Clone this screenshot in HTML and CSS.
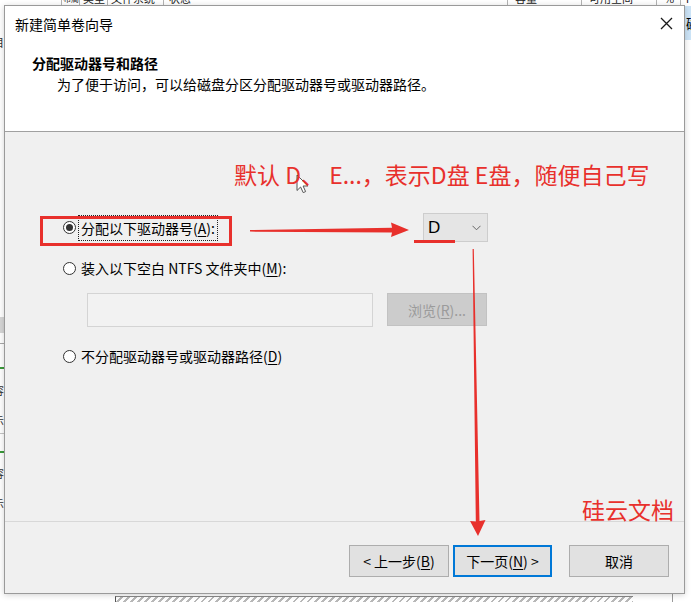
FILE: index.html
```html
<!DOCTYPE html>
<html lang="zh-CN">
<head>
<meta charset="utf-8">
<title>新建简单卷向导</title>
<link rel="stylesheet" href="styles.css">
</head>
<body>
<div class="app">
  <div class="cols">
    <div class="col c0"></div>
    <div class="col c1"><span>布局</span></div>
    <div class="col c2"><span>类型</span></div>
    <div class="col c3"><span>文件系统</span></div>
    <div class="col c4"><span>状态</span></div>
    <div class="col c5"><span>容量</span></div>
    <div class="col c6"><span>可用空间</span></div>
    <div class="col c7"><span>%</span></div>
    <div class="col c8"><span>i</span></div>
  </div>
  <div class="app-main">
    <div class="lstrip">
      <div class="ls-glyph">目</div>
      <div class="ls-bar"></div>
      <div class="ls-line"></div>
      <div class="ls-green"></div>
      <div class="ls-text">容</div>
      <div class="ls-text">0</div>
      <div class="ls-text">示</div>
      <div class="ls-line2"></div>
      <div class="ls-green2"></div>
      <div class="ls-text first2">容</div>
      <div class="ls-text">0</div>
      <div class="ls-text">示</div>
    </div>
    <div class="app-fill"></div>
    <div class="rstrip"><div class="sel">磁</div></div>
  </div>
  <div class="app-bottom"><div class="hatch"></div><div class="vline"></div></div>
</div>

<div class="dialog">
  <div class="head">
    <div class="titlebar">
      <span class="title">新建简单卷向导</span>
      <svg class="close" width="13" height="13" viewBox="0 0 13 13"><path d="M1 1 L12 12 M12 1 L1 12" stroke="#1a1a1a" stroke-width="1.3" fill="none"/></svg>
    </div>
    <div class="heading">分配驱动器号和路径</div>
    <div class="desc">为了便于访问，可以给磁盘分区分配驱动器号或驱动器路径。</div>
  </div>
  <div class="body">
    <div class="row row1">
      <div class="opt opt-main">
        <span class="radio on"></span>
        <span class="lbl focus">分配以下驱动器号(<u>A</u>):</span>
      </div>
      <div class="combo">
        <span class="val">D</span>
        <svg width="9" height="6" viewBox="0 0 9 6"><polyline points="0.5,0.8 4.5,4.8 8.5,0.8" fill="none" stroke="#666" stroke-width="1"/></svg>
      </div>
    </div>
    <div class="row row2">
      <div class="opt">
        <span class="radio"></span>
        <span class="lbl">装入以下空白 NTFS 文件夹中(<u>M</u>):</span>
      </div>
    </div>
    <div class="tbrow">
      <div class="tb"></div>
      <div class="browse">浏览(<u>R</u>)...</div>
    </div>
    <div class="row row3">
      <div class="opt">
        <span class="radio"></span>
        <span class="lbl">不分配驱动器号或驱动器路径(<u>D</u>)</span>
      </div>
    </div>
  </div>
  <div class="footer">
    <div class="btn">&lt; 上一步(<u>B</u>)</div>
    <div class="btn def">下一页(<u>N</u>) &gt;</div>
    <div class="btn cancel">取消</div>
  </div>
</div>

<svg class="annot" width="691" height="602" viewBox="0 0 691 602">
  <rect x="41.5" y="217.5" width="189" height="27" fill="none" stroke="#e8302c" stroke-width="3"/>
  <polygon points="250,230 392,227.8 391,222.5 409,230 391,237 392,232.5 250,231.6" fill="#e8302c"/>
  <rect x="414" y="240" width="41" height="3" fill="#e8302c"/>
  <polygon points="472.6,249 473.8,249 479.5,521 485.5,520 478,536 470,521 475.8,521.5" fill="#e8302c"/>
  <path transform="translate(297,175)" d="M0 0 L0 15.5 L3.6 12 L6.2 17.6 L8.6 16.6 L6.1 11 L11 11 Z" fill="#fff" stroke="#555" stroke-width="1" stroke-linejoin="round"/>
</svg>
<div class="note note1">默认 D、 E...，表示D盘 E盘，随便自己写</div>
<div class="note note2">硅云文档</div>
</body>
</html>
```

FILE: styles.css
```css
* { box-sizing: border-box; }
html, body { margin: 0; padding: 0; }
body {
  width: 691px;
  height: 602px;
  overflow: hidden;
  position: relative;
  background: #fff;
  font-family: "Noto Sans CJK SC", "Microsoft YaHei", sans-serif;
  font-size: 14px;
  color: #000;
}
u { text-decoration: underline; text-underline-offset: 2px; }

/* background application */
.app { display: flex; flex-direction: column; height: 602px; }
.cols { display: flex; height: 5px; overflow: hidden; background: #fff; font-size: 11px; color: #222; }
.col { border-left: 1px solid #b4b4b4; padding-left: 7px; overflow: hidden; flex: none; }
.col span { display: block; margin-top: -7px; line-height: 11px; white-space: nowrap; }
.c0 { width: 61px; border-left: none; }
.c1 { width: 18px; padding-left: 1px; font-size: 8px; }
.c2 { width: 28px; padding-left: 3px; }
.c3 { width: 56px; padding-left: 3px; font-size: 11px; }
.c4 { width: 344px; padding-left: 5px; }
.c5 { width: 74px; }
.c6 { width: 75px; }
.c7 { width: 24px; }
.c8 { flex: 1; padding-left: 5px; }

.app-main { flex: 1; display: flex; }
.lstrip { width: 4px; overflow: hidden; display: flex; flex-direction: column; font-size: 11px; color: #333; }
.ls-glyph { margin-top: 30px; height: 15px; line-height: 15px; margin-left: -7px; }
.ls-bar { margin-top: 267px; height: 16px; background: #d6d6d6; }
.ls-line { margin-top: 10px; height: 1px; background: #a8a8a8; }
.ls-green { margin-top: 23px; height: 2px; background: #3a9a3a; }
.ls-text { height: 15px; line-height: 15px; margin-left: -7px; overflow: hidden; }
.ls-green + .ls-text { margin-top: 14px; }
.ls-line2 { margin-top: 5px; height: 1px; background: #c4c4c4; }
.ls-green2 { margin-top: 17px; height: 2px; background: #3a9a3a; }
.ls-text.first2 { margin-top: 13px; }
.app-fill { flex: 1; }
.rstrip { width: 6px; overflow: hidden; }
.sel { margin-top: 1px; height: 34px; background: #cce4f7; line-height: 34px; padding-left: 1px; font-size: 14px; }

.app-bottom { height: 8px; display: flex; }
.hatch {
  margin-left: 115px; margin-top: 2px; width: 518px; height: 6px;
  border-left: 1px solid #555; border-top: 1px solid #8a8a8a;
  background: repeating-linear-gradient(135deg, #fff 0 3px, #b8b8b8 3px 5px);
}
.vline { margin-left: 39px; width: 1px; background: #9a9a9a; }

/* dialog window */
.dialog {
  position: absolute; left: 4px; top: 5px;
  width: 681px; height: 589px;
  border: 1px solid #9a9a9a;
  background: #f0f0f0;
  display: flex; flex-direction: column;
  box-shadow: 0 1px 6px rgba(0,0,0,0.18);
}
.head { height: 126px; background: #fff; border-bottom: 1px solid #a0a0a0; flex: none; }
.titlebar { height: 36px; display: flex; align-items: center; justify-content: space-between; padding: 0 11px 0 10px; }
.title { font-size: 14px; line-height: 36px; }
.close { display: block; margin-top: -1px; }
.heading { margin: 11px 0 0 27px; font-weight: bold; line-height: 20px; }
.desc { margin: 1px 0 0 52px; line-height: 20px; }

.body { flex: 1; padding: 81px 0 0 58px; }
.row { display: flex; align-items: center; }
.row1 { height: 29px; }
.row2 { height: 20px; margin-top: 16px; }
.row3 { height: 20px; margin-top: 19px; }
.opt { display: flex; align-items: center; }
.opt-main { width: 360px; }
.radio {
  width: 13px; height: 13px; border: 1px solid #333; border-radius: 50%;
  flex: none; display: flex; align-items: center; justify-content: center; background: #fff;
}
.radio.on::after { content: ""; width: 7px; height: 7px; border-radius: 50%; background: #333; }
.lbl { margin-left: 3px; padding: 0 2px; line-height: 20px; white-space: nowrap; }
.lbl.focus { outline: 1px dotted #222; line-height: 24px; }
.combo {
  width: 65px; height: 29px; background: #e5e5e5; border: 1px solid #cdcdcd;
  display: flex; align-items: center; justify-content: space-between; padding: 0 6px 0 4px;
}
.combo .val { font-size: 17px; line-height: 1; font-family: "Liberation Sans", "Noto Sans CJK SC", sans-serif; }
.tbrow { display: flex; gap: 14px; margin: 15px 0 0 24px; }
.tb { width: 286px; height: 34px; border: 1px solid #d4d4d4; background: #f2f2f2; }
.browse {
  width: 100px; height: 33px; background: #cccccc; border: 1px solid #c2c2c2;
  color: #9b9b9b; display: flex; align-items: center; justify-content: center;
}

.footer {
  height: 72px; flex: none; border-top: 1px solid #d8d8d8;
  display: flex; justify-content: flex-end; align-items: flex-start;
  padding: 23px 15px 0 0;
}
.btn {
  width: 100px; height: 32px; background: #e1e1e1; border: 1px solid #adadad;
  display: flex; align-items: center; justify-content: center; white-space: nowrap;
}
.btn.def { width: 99px; margin-left: 4px; border: 2px solid #0078d7; }
.btn.cancel { margin-left: 17px; }

/* annotations */
.annot { position: absolute; left: 0; top: 0; pointer-events: none; }
.note {
  position: absolute; color: #e8302c; font-size: 23px; line-height: 1;
  white-space: nowrap; font-family: "Noto Sans CJK SC", sans-serif;
}
.note1 { left: 234px; top: 163px; }
.note2 { left: 582px; top: 498px; }
```
